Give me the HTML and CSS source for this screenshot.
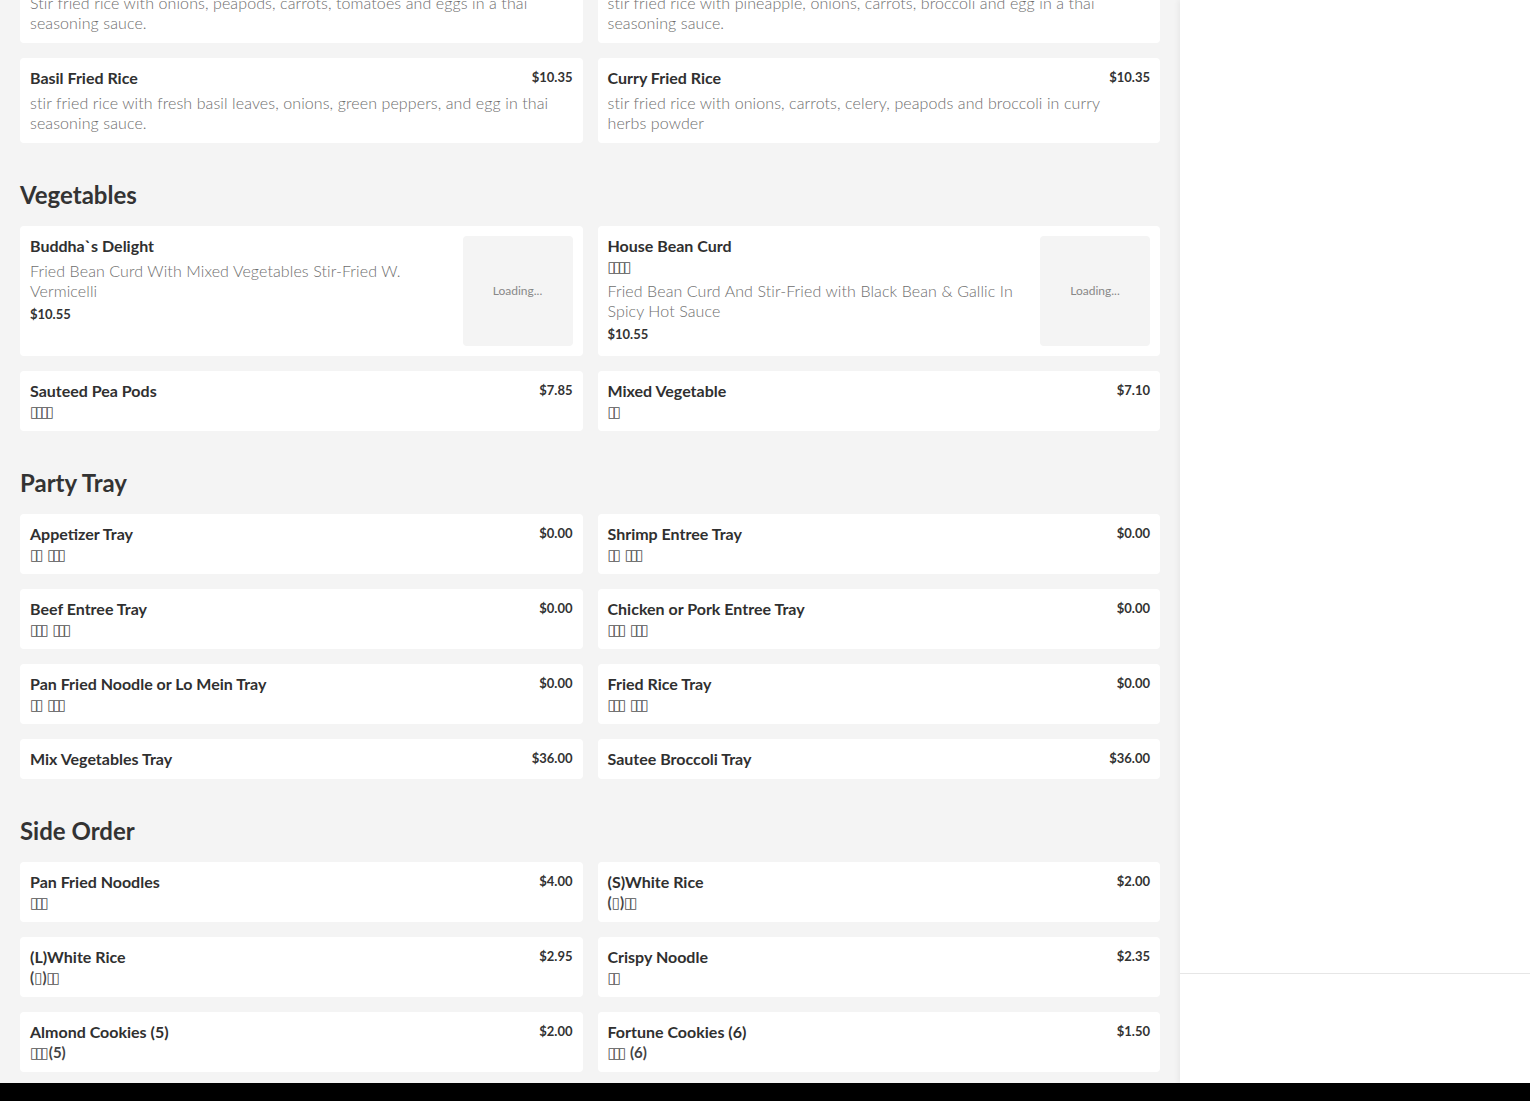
FILE: index.html
```html
<!DOCTYPE html>
<html lang="en">
<head>
<meta charset="utf-8">
<title>Menu</title>
<link rel="stylesheet" href="styles.css">
</head>
<body>
<div class="app">
  <div class="layout">
    <main class="menu">
      <div class="menu-inner">
        <div class="grid">
          <div class="card">
            <div class="card-head"><span class="name">Thai Fried Rice</span><span class="price">$10.35</span></div>
            <p class="desc">Stir fried rice with onions, peapods, carrots, tomatoes and eggs in a thai seasoning sauce.</p>
          </div>
          <div class="card">
            <div class="card-head"><span class="name">Pineapple Fried Rice</span><span class="price">$10.35</span></div>
            <p class="desc">stir fried rice with pineapple, onions, carrots, broccoli and egg in a thai seasoning sauce.</p>
          </div>
          <div class="card">
            <div class="card-head"><span class="name">Basil Fried Rice</span><span class="price">$10.35</span></div>
            <p class="desc">stir fried rice with fresh basil leaves, onions, green peppers, and egg in thai seasoning sauce.</p>
          </div>
          <div class="card">
            <div class="card-head"><span class="name">Curry Fried Rice</span><span class="price">$10.35</span></div>
            <p class="desc">stir fried rice with onions, carrots, celery, peapods and broccoli in curry herbs powder</p>
          </div>
        </div>

        <section class="section">
          <h2 class="section-title">Vegetables</h2>
          <div class="grid">
            <div class="card card-img">
              <div class="info">
                <div class="name">Buddha`s Delight</div>
                <p class="desc">Fried Bean Curd With Mixed Vegetables Stir-Fried W. Vermicelli</p>
                <div class="price price-below">$10.55</div>
              </div>
              <div class="thumb">Loading...</div>
            </div>
            <div class="card card-img">
              <div class="info">
                <div class="name">House Bean Curd</div>
                <div class="alt"><span class="tofu">▯▯▯▯</span></div>
                <p class="desc">Fried Bean Curd And Stir-Fried with Black Bean &amp; Gallic In Spicy Hot Sauce</p>
                <div class="price price-below">$10.55</div>
              </div>
              <div class="thumb">Loading...</div>
            </div>
            <div class="card">
              <div class="card-head"><span class="name">Sauteed Pea Pods</span><span class="price">$7.85</span></div>
              <div class="alt"><span class="tofu">▯▯▯▯</span></div>
            </div>
            <div class="card">
              <div class="card-head"><span class="name">Mixed Vegetable</span><span class="price">$7.10</span></div>
              <div class="alt"><span class="tofu">▯▯</span></div>
            </div>
          </div>
        </section>

        <section class="section">
          <h2 class="section-title">Party Tray</h2>
          <div class="grid">
            <div class="card">
              <div class="card-head"><span class="name">Appetizer Tray</span><span class="price">$0.00</span></div>
              <div class="alt"><span class="tofu">▯▯</span> <span class="tofu">▯▯▯</span></div>
            </div>
            <div class="card">
              <div class="card-head"><span class="name">Shrimp Entree Tray</span><span class="price">$0.00</span></div>
              <div class="alt"><span class="tofu">▯▯</span> <span class="tofu">▯▯▯</span></div>
            </div>
            <div class="card">
              <div class="card-head"><span class="name">Beef Entree Tray</span><span class="price">$0.00</span></div>
              <div class="alt"><span class="tofu">▯▯▯</span> <span class="tofu">▯▯▯</span></div>
            </div>
            <div class="card">
              <div class="card-head"><span class="name">Chicken or Pork Entree Tray</span><span class="price">$0.00</span></div>
              <div class="alt"><span class="tofu">▯▯▯</span> <span class="tofu">▯▯▯</span></div>
            </div>
            <div class="card">
              <div class="card-head"><span class="name">Pan Fried Noodle or Lo Mein Tray</span><span class="price">$0.00</span></div>
              <div class="alt"><span class="tofu">▯▯</span> <span class="tofu">▯▯▯</span></div>
            </div>
            <div class="card">
              <div class="card-head"><span class="name">Fried Rice Tray</span><span class="price">$0.00</span></div>
              <div class="alt"><span class="tofu">▯▯▯</span> <span class="tofu">▯▯▯</span></div>
            </div>
            <div class="card">
              <div class="card-head"><span class="name">Mix Vegetables Tray</span><span class="price">$36.00</span></div>
            </div>
            <div class="card">
              <div class="card-head"><span class="name">Sautee Broccoli Tray</span><span class="price">$36.00</span></div>
            </div>
          </div>
        </section>

        <section class="section">
          <h2 class="section-title">Side Order</h2>
          <div class="grid">
            <div class="card">
              <div class="card-head"><span class="name">Pan Fried Noodles</span><span class="price">$4.00</span></div>
              <div class="alt"><span class="tofu">▯▯▯</span></div>
            </div>
            <div class="card">
              <div class="card-head"><span class="name">(S)White Rice</span><span class="price">$2.00</span></div>
              <div class="alt">(<span class="tofu">▯</span>)<span class="tofu">▯▯</span></div>
            </div>
            <div class="card">
              <div class="card-head"><span class="name">(L)White Rice</span><span class="price">$2.95</span></div>
              <div class="alt">(<span class="tofu">▯</span>)<span class="tofu">▯▯</span></div>
            </div>
            <div class="card">
              <div class="card-head"><span class="name">Crispy Noodle</span><span class="price">$2.35</span></div>
              <div class="alt"><span class="tofu">▯▯</span></div>
            </div>
            <div class="card">
              <div class="card-head"><span class="name">Almond Cookies (5)</span><span class="price">$2.00</span></div>
              <div class="alt"><span class="tofu">▯▯▯</span>(5)</div>
            </div>
            <div class="card">
              <div class="card-head"><span class="name">Fortune Cookies (6)</span><span class="price">$1.50</span></div>
              <div class="alt"><span class="tofu">▯▯▯</span> (6)</div>
            </div>
          </div>
        </section>
      </div>
    </main>
    <aside class="sidebar">
      <div class="side-top"></div>
      <div class="side-bottom"></div>
    </aside>
  </div>
  <footer class="bar"></footer>
</div>
</body>
</html>
```

FILE: styles.css
```css
* { box-sizing: border-box; }

html, body {
  margin: 0;
  padding: 0;
  height: 100%;
}

body {
  font-family: "Lato", "Noto Sans", sans-serif;
  color: #333;
  background: #f4f4f4;
}

.app {
  height: 100vh;
  display: flex;
  flex-direction: column;
}

.layout {
  flex: 1;
  display: flex;
  min-height: 0;
}

.menu {
  width: 1180px;
  flex: none;
  overflow: hidden;
  background: #f4f4f4;
  padding: 0 20px;
}

.menu-inner {
  margin-top: -42px;
}

.grid {
  display: grid;
  grid-template-columns: 1fr 1fr;
  gap: 15px;
}

.section {
  padding-top: 37px;
}

.section-title {
  margin: 0 0 16px;
  font-size: 24px;
  line-height: 30px;
  font-weight: 700;
  color: #333;
}

.card {
  background: #fff;
  border-radius: 4px;
  padding: 10px;
}

.card-head {
  display: flex;
  justify-content: space-between;
  align-items: flex-start;
}

.name {
  font-size: 16px;
  line-height: 19px;
  padding-bottom: 1px;
  font-weight: 700;
  color: #303030;
}

.price {
  font-size: 13px;
  line-height: 19px;
  font-weight: 700;
  color: #333;
  margin-left: 12px;
  flex: none;
}

.price-below {
  margin: 5px 0 0;
  line-height: 16px;
}

.desc {
  margin: 5px 0 0;
  padding-right: 16px;
  font-size: 16px;
  line-height: 20px;
  font-weight: 300;
  letter-spacing: 0.1px;
  color: #6e6e6e;
}

.alt {
  height: 20px;
  font-size: 15px;
  line-height: 20px;
  font-weight: 700;
  color: #444;
}

.tofu {
  font-family: "DejaVu Sans", sans-serif;
  font-weight: 400;
  font-size: 15px;
  line-height: 20px;
  letter-spacing: -3px;
  margin-right: 3px;
  color: #555;
}

.card-img {
  display: flex;
  gap: 10px;
}

.card-img .info {
  flex: 1;
  min-width: 0;
}

.card-img .desc {
  padding-right: 0;
}

.thumb {
  flex: none;
  width: 110px;
  height: 110px;
  border-radius: 4px;
  background: #f4f4f4;
  color: #888;
  font-size: 12px;
  font-weight: 400;
  display: flex;
  align-items: center;
  justify-content: center;
  padding-bottom: 2px;
}

.sidebar {
  flex: 1;
  background: #fff;
  display: flex;
  flex-direction: column;
  box-shadow: -2px 0 5px rgba(0, 0, 0, 0.05);
}

.side-top {
  flex: 1;
  border-bottom: 1px solid #e6e6e6;
}

.side-bottom {
  height: 109px;
  flex: none;
}

.bar {
  height: 18px;
  flex: none;
  background: #000;
}
```
